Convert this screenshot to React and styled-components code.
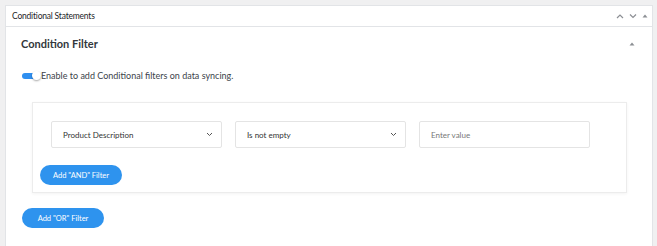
import React, { useState } from "react";
import styled, { createGlobalStyle } from "styled-components";

const GlobalStyle = createGlobalStyle`
  html, body {
    margin: 0;
    padding: 0;
    background: #f0f0f1;
    font-family: Lato, "Open Sans", sans-serif;
    color: #1d2327;
  }
`;

const Page = styled.div`
  padding: 5px 4px 0 5px;
  height: 246px;
  box-sizing: border-box;
  overflow: hidden;
`;

const Panel = styled.div`
  background: #fff;
  border: 1px solid #e2e4e7;
  min-height: 260px;
`;

const PanelHeader = styled.div`
  display: flex;
  align-items: center;
  justify-content: space-between;
  height: 20px;
  padding: 0 4px 0 6px;
  border-bottom: 1px solid #e2e4e7;
  font-size: 8.5px;
  letter-spacing: -0.2px;
  color: #1d2327;
`;

const HeaderIcons = styled.div`
  display: flex;
  align-items: center;
  gap: 5px;
  color: #8c8f94;
`;

const Body = styled.div`
  padding: 10px 15px 0 15px;
`;

const TitleRow = styled.div`
  display: flex;
  align-items: center;
  justify-content: space-between;
  padding-right: 2px;
  h3 {
    margin: 0;
    font-size: 11px;
    font-weight: 700;
    color: #32373c;
  }
`;

const ToggleRow = styled.label`
  display: flex;
  align-items: center;
  gap: 3px;
  margin-top: 20px;
  font-size: 9px;
  color: #3c434a;
`;

const Track = styled.span`
  position: relative;
  width: 16px;
  height: 6px;
  border-radius: 3px;
  margin-left: 1px;
  background: ${(p) => (p.$on ? "#2f8ff0" : "#c3c4c7")};
  &::after {
    content: "";
    position: absolute;
    top: -2px;
    left: ${(p) => (p.$on ? "10px" : "-1px")};
    width: 9px;
    height: 9px;
    border-radius: 50%;
    background: #fff;
    box-shadow: 0 1px 2px rgba(0, 0, 0, 0.35);
  }
`;

const FilterBox = styled.div`
  margin: 21px 10px 0 11px;
  border: 1px solid #ececec;
  box-shadow: 0 1px 3px rgba(0, 0, 0, 0.05);
  padding: 18px 17px 7px 7px;
`;

const FieldRow = styled.div`
  display: flex;
  gap: 13px;
  padding-left: 11px;
`;

const Field = styled.div`
  display: flex;
  align-items: center;
  justify-content: space-between;
  box-sizing: border-box;
  width: 171px;
  height: 27px;
  padding: 0 8px 0 11px;
  border: 1px solid #e4e4e4;
  border-radius: 2px;
  font-size: 8px;
  color: ${(p) => (p.$muted ? "#777" : "#333")};
`;

const PillButton = styled.button`
  display: block;
  height: 20px;
  width: 82px;
  border: none;
  border-radius: 10px;
  background: #2e93ee;
  color: #fff;
  font-family: Lato, sans-serif;
  font-size: 7.5px;
  padding: 0;
  margin-top: ${(p) => p.$top || 0}px;
  margin-left: ${(p) => p.$left || 0}px;
  cursor: pointer;
`;

const Chevron = ({ up }) => (
  <svg width="8" height="6" viewBox="0 0 8 6">
    <path
      d={up ? "M1 5 L4 2 L7 5" : "M1 1.5 L4 4.5 L7 1.5"}
      fill="none"
      stroke="#8c8f94"
      strokeWidth="1.2"
    />
  </svg>
);

const Caret = () => (
  <svg width="6" height="4" viewBox="0 0 6 4">
    <path d="M0.5 3.5 L3 0.5 L5.5 3.5 Z" fill="#8c8f94" />
  </svg>
);

const SelectField = ({ children }) => (
  <Field>
    <span>{children}</span>
    <svg width="7" height="5" viewBox="0 0 7 5">
      <path d="M1 1 L3.5 3.5 L6 1" fill="none" stroke="#555" strokeWidth="1" />
    </svg>
  </Field>
);

export default function App() {
  const [on, setOn] = useState(true);
  return (
    <Page>
      <GlobalStyle />
      <Panel>
        <PanelHeader>
          <span>Conditional Statements</span>
          <HeaderIcons>
            <Chevron up />
            <Chevron />
            <Caret />
          </HeaderIcons>
        </PanelHeader>
        <Body>
          <TitleRow>
            <h3>Condition Filter</h3>
            <Caret />
          </TitleRow>
          <ToggleRow onClick={() => setOn(!on)}>
            <Track $on={on} />
            <span>Enable to add Conditional filters on data syncing.</span>
          </ToggleRow>
          <FilterBox>
            <FieldRow>
              <SelectField>Product Description</SelectField>
              <SelectField>Is not empty</SelectField>
              <Field $muted>Enter value</Field>
            </FieldRow>
            <PillButton $top={17}>Add "AND" Filter</PillButton>
          </FilterBox>
          <PillButton $top={15} $left={1}>Add "OR" Filter</PillButton>
        </Body>
      </Panel>
    </Page>
  );
}
